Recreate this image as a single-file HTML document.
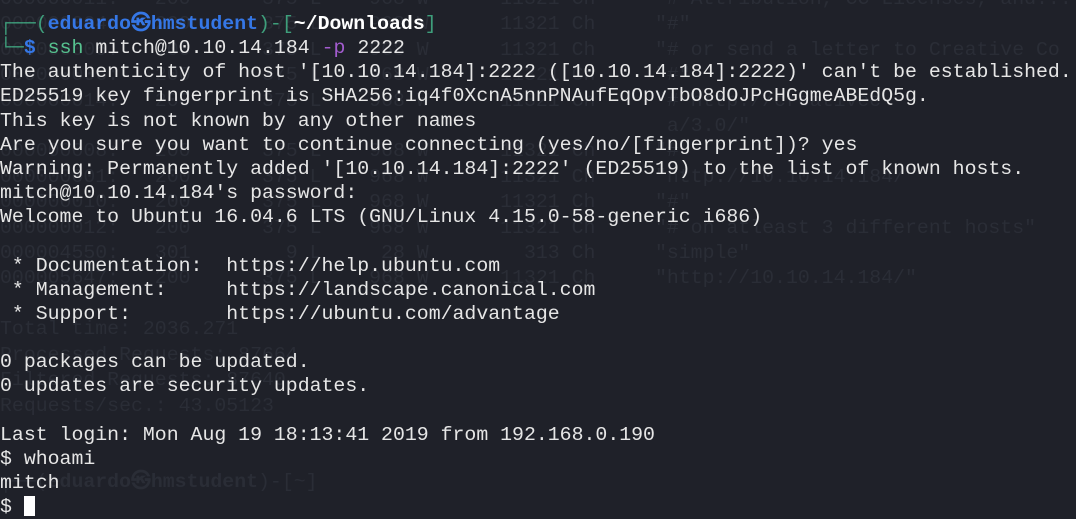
<!DOCTYPE html>
<html><head><meta charset="utf-8"><style>
html,body{margin:0;padding:0;background:#1f2129;width:1076px;height:498px;overflow:hidden}
.t{position:absolute;left:0;top:12px;font-family:"Liberation Mono",monospace;font-size:19.85px;line-height:24.15px;color:#e6e6e6;white-space:pre}
.f{position:absolute;left:0;top:-14px;font-family:"Liberation Mono",monospace;font-size:19.85px;line-height:25.4px;color:#2a2d36;white-space:pre}
.g{color:#3e9e7b}.b{color:#3577e6;font-weight:bold}.w{color:#fff;font-weight:bold}.s{color:#56c28f}.p{color:#a35ccf}
.cur{display:inline-block;width:11px;height:20px;background:#fff;vertical-align:-4px}
</style></head><body>
<div class="f">000000011:   200      375 L    968 W      11321 Ch     "# Attribution, CC Licenses, and..."
000000004:   200      375 L    968 W      11321 Ch     "#"
000000005:   200      375 L    968 W      11321 Ch     "# or send a letter to Creative Co
000000006:   200      375 L    968 W      11321 Ch     "#"
000000014:   200      375 L    968 W      11321 Ch     "# http://creativec
                                                        a/3.0/"
000000008:   200      375 L    968 W      11321 Ch     "#"
000000001:   200      375 L    968 W      11321 Ch     "http://10.10.14.184/"
000000010:   200      375 L    968 W      11321 Ch     "#"
000000012:   200      375 L    968 W      11321 Ch     "# on atleast 3 different hosts"
000004550:   301        9 L     28 W        313 Ch     "simple"
000005647:   200      375 L    968 W      11321 Ch     "http://10.10.14.184/"

Total time: 2036.271
Processed Requests: 87664
Filtered Requests: 87640
Requests/sec.: 43.05123


┌──(<b>eduardo㉿hmstudent</b>)-[~]</div>
<div class="t"><span class="g">┌──(</span><span class="b">eduardo㉿hmstudent</span><span class="g">)-[</span><span class="w">~/Downloads</span><span class="g">]</span>
<span class="g">└─</span><span class="b">$</span> <span class="s">ssh</span> mitch@10.10.14.184 <span class="p">-p</span> 2222
The authenticity of host '[10.10.14.184]:2222 ([10.10.14.184]:2222)' can't be established.
ED25519 key fingerprint is SHA256:iq4f0XcnA5nnPNAufEqOpvTbO8dOJPcHGgmeABEdQ5g.
This key is not known by any other names
Are you sure you want to continue connecting (yes/no/[fingerprint])? yes
Warning: Permanently added '[10.10.14.184]:2222' (ED25519) to the list of known hosts.
mitch@10.10.14.184's password: 
Welcome to Ubuntu 16.04.6 LTS (GNU/Linux 4.15.0-58-generic i686)

 * Documentation:  https://help.ubuntu.com
 * Management:     https://landscape.canonical.com
 * Support:        https://ubuntu.com/advantage

0 packages can be updated.
0 updates are security updates.

Last login: Mon Aug 19 18:13:41 2019 from 192.168.0.190
$ whoami
mitch
$ <span class="cur"></span></div>
</body></html>
